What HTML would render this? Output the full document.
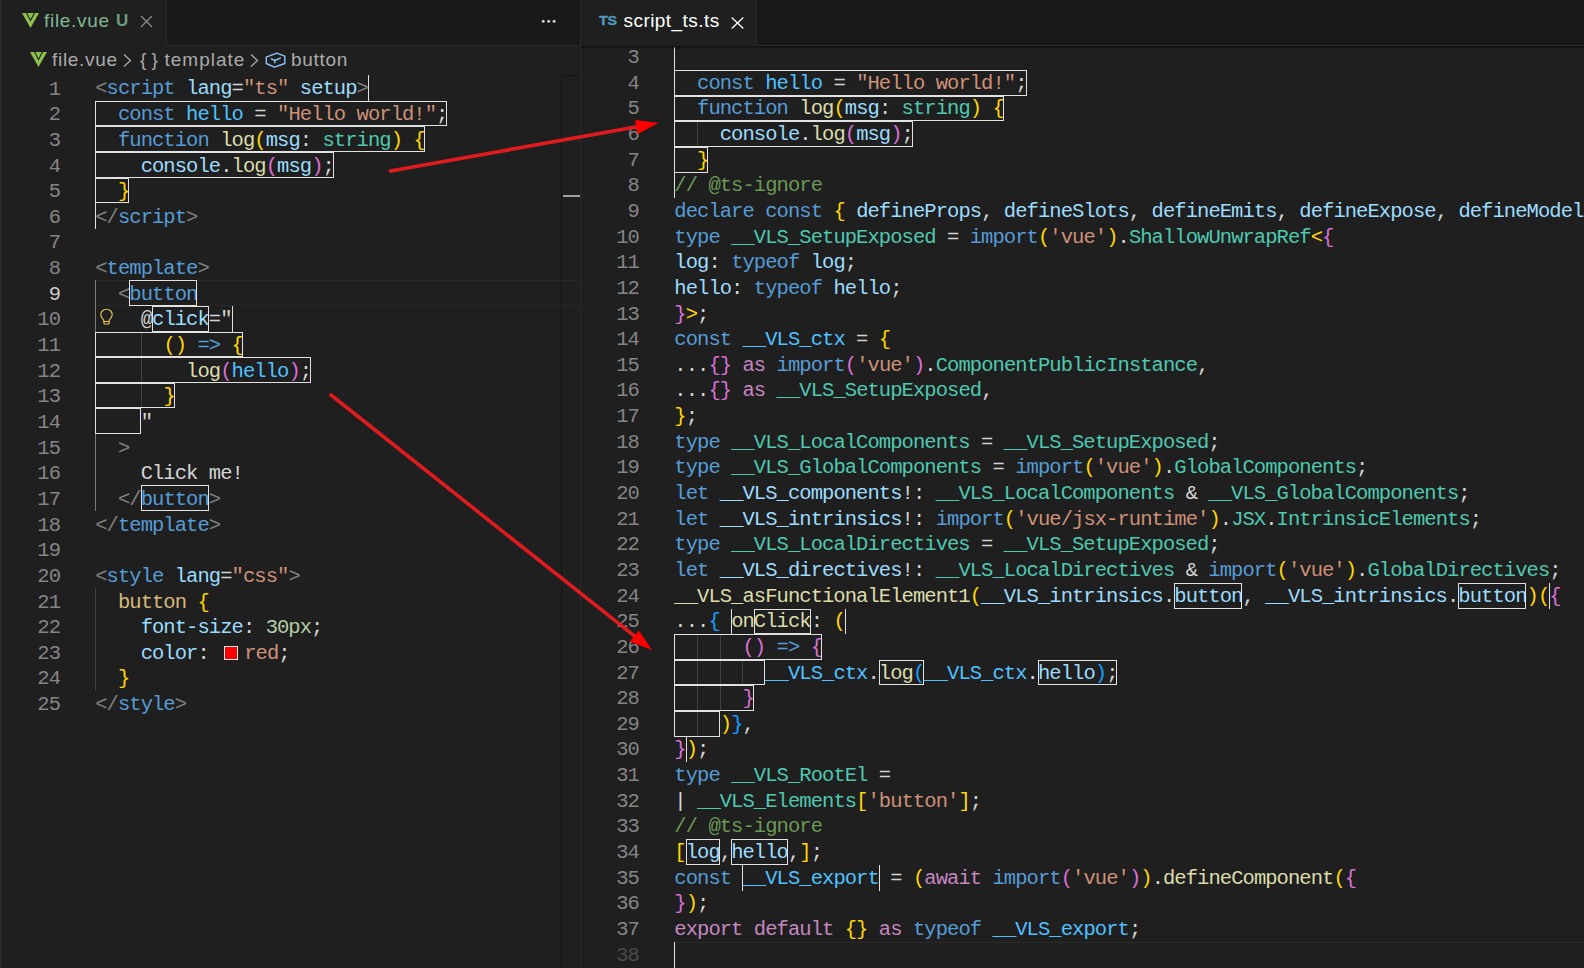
<!DOCTYPE html><html><head><meta charset="utf-8"><style>
*{margin:0;padding:0;box-sizing:border-box}
html,body{width:1584px;height:968px;overflow:hidden;background:#1f1f1f}
body{position:relative;font-family:"Liberation Sans",sans-serif}
.abs{position:absolute}
.ln{position:absolute;white-space:pre;font-family:"Liberation Mono",monospace;font-size:20.5px;letter-spacing:-0.939845px;line-height:25.645px;height:25.645px}
.num{position:absolute;white-space:pre;font-family:"Liberation Mono",monospace;font-size:20.5px;letter-spacing:-0.939845px;line-height:25.645px;text-align:right;color:#858585}
.bx{position:absolute;border:1px solid #E2E2E2}
.vl{position:absolute;width:1px;background:#E2E2E2}
.ig{position:absolute;width:1px;background:#404040}
.ig.act{background:#7a7a7a}
.sw{display:inline-block;width:14px;height:14px;background:#FF0000;border:1px solid #EEEEEE;margin:0 6px 0 4px;vertical-align:-1px}
</style></head><body><div class="abs" style="left:0;top:0;width:580px;height:968px;background:#1f1f1f;overflow:hidden"><div class="abs" style="left:0;top:0;width:580px;height:46px;background:#181818;border-bottom:1px solid #2B2B2B"></div><div class="abs" style="left:0;top:0;width:167px;height:46px;background:#1f1f1f;border-right:1px solid #2B2B2B"></div><div class="abs" style="left:95px;top:280px;width:485px;height:26px;border-top:1px solid #282828;border-bottom:1px solid #282828"></div><div class="ig act" style="left:95px;top:280px;height:231px"></div><div class="ig" style="left:95px;top:588px;height:103px"></div><div class="ig" style="left:141px;top:332px;height:76px"></div><div class="ln" style="left:95.20px;top:75.600px"><span style="color:#808080">&lt;</span><span style="color:#569CD6">script</span><span style="color:#D4D4D4"> </span><span style="color:#9CDCFE">lang</span><span style="color:#D4D4D4">=</span><span style="color:#CE9178">&quot;ts&quot;</span><span style="color:#D4D4D4"> </span><span style="color:#9CDCFE">setup</span><span style="color:#808080">&gt;</span></div><div class="ln" style="left:95.20px;top:102.245px"><span style="color:#D4D4D4">  </span><span style="color:#569CD6">const</span><span style="color:#D4D4D4"> </span><span style="color:#4FC1FF">hello</span><span style="color:#D4D4D4"> = </span><span style="color:#CE9178">&quot;Hello world!&quot;</span><span style="color:#D4D4D4">;</span></div><div class="ln" style="left:95.20px;top:127.890px"><span style="color:#D4D4D4">  </span><span style="color:#569CD6">function</span><span style="color:#D4D4D4"> </span><span style="color:#DCDCAA">log</span><span style="color:#FFD700">(</span><span style="color:#9CDCFE">msg</span><span style="color:#D4D4D4">: </span><span style="color:#4EC9B0">string</span><span style="color:#FFD700">)</span><span style="color:#D4D4D4"> </span><span style="color:#FFD700">{</span></div><div class="ln" style="left:95.20px;top:153.535px"><span style="color:#D4D4D4">    </span><span style="color:#9CDCFE">console</span><span style="color:#D4D4D4">.</span><span style="color:#DCDCAA">log</span><span style="color:#DA70D6">(</span><span style="color:#9CDCFE">msg</span><span style="color:#DA70D6">)</span><span style="color:#D4D4D4">;</span></div><div class="ln" style="left:95.20px;top:179.180px"><span style="color:#D4D4D4">  </span><span style="color:#FFD700">}</span></div><div class="ln" style="left:95.20px;top:204.825px"><span style="color:#808080">&lt;/</span><span style="color:#569CD6">script</span><span style="color:#808080">&gt;</span></div><div class="ln" style="left:95.20px;top:230.470px"></div><div class="ln" style="left:95.20px;top:256.115px"><span style="color:#808080">&lt;</span><span style="color:#569CD6">template</span><span style="color:#808080">&gt;</span></div><div class="ln" style="left:95.20px;top:281.760px"><span style="color:#D4D4D4">  </span><span style="color:#808080">&lt;</span><span style="color:#569CD6">button</span></div><div class="ln" style="left:95.20px;top:307.405px"><span style="color:#D4D4D4">    </span><span style="color:#D4D4D4">@</span><span style="color:#9CDCFE">click</span><span style="color:#D4D4D4">=</span><span style="color:#D4D4D4">&quot;</span></div><div class="ln" style="left:95.20px;top:333.050px"><span style="color:#D4D4D4">      </span><span style="color:#FFD700">()</span><span style="color:#D4D4D4"> </span><span style="color:#569CD6">=&gt;</span><span style="color:#D4D4D4"> </span><span style="color:#FFD700">{</span></div><div class="ln" style="left:95.20px;top:358.695px"><span style="color:#D4D4D4">        </span><span style="color:#DCDCAA">log</span><span style="color:#DA70D6">(</span><span style="color:#4FC1FF">hello</span><span style="color:#DA70D6">)</span><span style="color:#D4D4D4">;</span></div><div class="ln" style="left:95.20px;top:384.340px"><span style="color:#D4D4D4">      </span><span style="color:#FFD700">}</span></div><div class="ln" style="left:95.20px;top:409.985px"><span style="color:#D4D4D4">    </span><span style="color:#D4D4D4">&quot;</span></div><div class="ln" style="left:95.20px;top:435.630px"><span style="color:#D4D4D4">  </span><span style="color:#808080">&gt;</span></div><div class="ln" style="left:95.20px;top:461.275px"><span style="color:#D4D4D4">    </span><span style="color:#D4D4D4">Click me!</span></div><div class="ln" style="left:95.20px;top:486.920px"><span style="color:#D4D4D4">  </span><span style="color:#808080">&lt;/</span><span style="color:#569CD6">button</span><span style="color:#808080">&gt;</span></div><div class="ln" style="left:95.20px;top:512.565px"><span style="color:#808080">&lt;/</span><span style="color:#569CD6">template</span><span style="color:#808080">&gt;</span></div><div class="ln" style="left:95.20px;top:538.210px"></div><div class="ln" style="left:95.20px;top:563.855px"><span style="color:#808080">&lt;</span><span style="color:#569CD6">style</span><span style="color:#D4D4D4"> </span><span style="color:#9CDCFE">lang</span><span style="color:#D4D4D4">=</span><span style="color:#CE9178">&quot;css&quot;</span><span style="color:#808080">&gt;</span></div><div class="ln" style="left:95.20px;top:589.500px"><span style="color:#D4D4D4">  </span><span style="color:#D7BA7D">button</span><span style="color:#D4D4D4"> </span><span style="color:#FFD700">{</span></div><div class="ln" style="left:95.20px;top:615.145px"><span style="color:#D4D4D4">    </span><span style="color:#9CDCFE">font-size</span><span style="color:#D4D4D4">: </span><span style="color:#B5CEA8">30px</span><span style="color:#D4D4D4">;</span></div><div class="ln" style="left:95.20px;top:640.790px"><span style="color:#D4D4D4">    </span><span style="color:#9CDCFE">color</span><span style="color:#D4D4D4">: </span><span class="sw"></span><span style="color:#CE9178">red</span><span style="color:#D4D4D4">;</span></div><div class="ln" style="left:95.20px;top:666.435px"><span style="color:#D4D4D4">  </span><span style="color:#FFD700">}</span></div><div class="ln" style="left:95.20px;top:692.080px"><span style="color:#808080">&lt;/</span><span style="color:#569CD6">style</span><span style="color:#808080">&gt;</span></div><div class="vl" style="left:368px;top:75px;height:26px"></div><div class="bx" style="left:95px;top:101px;width:352px;height:25px"></div><div class="bx" style="left:95px;top:126px;width:330px;height:26px"></div><div class="bx" style="left:95px;top:152px;width:239px;height:26px"></div><div class="bx" style="left:95px;top:178px;width:34px;height:25px"></div><div class="vl" style="left:95px;top:203px;height:26px"></div><div class="bx" style="left:129px;top:280px;width:68px;height:26px"></div><div class="bx" style="left:152px;top:306px;width:57px;height:26px"></div><div class="vl" style="left:232px;top:306px;height:26px"></div><div class="bx" style="left:95px;top:332px;width:148px;height:25px"></div><div class="bx" style="left:95px;top:357px;width:216px;height:26px"></div><div class="bx" style="left:95px;top:383px;width:80px;height:25px"></div><div class="bx" style="left:95px;top:408px;width:46px;height:26px"></div><div class="bx" style="left:141px;top:485px;width:68px;height:26px"></div><div class="num" style="right:519.94px;top:76.600px;color:#858585">1</div><div class="num" style="right:519.94px;top:102.245px;color:#858585">2</div><div class="num" style="right:519.94px;top:127.890px;color:#858585">3</div><div class="num" style="right:519.94px;top:153.535px;color:#858585">4</div><div class="num" style="right:519.94px;top:179.180px;color:#858585">5</div><div class="num" style="right:519.94px;top:204.825px;color:#858585">6</div><div class="num" style="right:519.94px;top:230.470px;color:#858585">7</div><div class="num" style="right:519.94px;top:256.115px;color:#858585">8</div><div class="num" style="right:519.94px;top:281.760px;color:#CCCCCC">9</div><div class="num" style="right:519.94px;top:307.405px;color:#858585">10</div><div class="num" style="right:519.94px;top:333.050px;color:#858585">11</div><div class="num" style="right:519.94px;top:358.695px;color:#858585">12</div><div class="num" style="right:519.94px;top:384.340px;color:#858585">13</div><div class="num" style="right:519.94px;top:409.985px;color:#858585">14</div><div class="num" style="right:519.94px;top:435.630px;color:#858585">15</div><div class="num" style="right:519.94px;top:461.275px;color:#858585">16</div><div class="num" style="right:519.94px;top:486.920px;color:#858585">17</div><div class="num" style="right:519.94px;top:512.565px;color:#858585">18</div><div class="num" style="right:519.94px;top:538.210px;color:#858585">19</div><div class="num" style="right:519.94px;top:563.855px;color:#858585">20</div><div class="num" style="right:519.94px;top:589.500px;color:#858585">21</div><div class="num" style="right:519.94px;top:615.145px;color:#858585">22</div><div class="num" style="right:519.94px;top:640.790px;color:#858585">23</div><div class="num" style="right:519.94px;top:666.435px;color:#858585">24</div><div class="num" style="right:519.94px;top:692.080px;color:#858585">25</div><div class="abs" style="left:561px;top:75px;width:1px;height:893px;background:#141414"></div><div class="abs" style="left:561px;top:75px;width:19px;height:1px;background:#141414"></div><div class="abs" style="left:563px;top:195px;width:17px;height:2px;background:#A0A0A0"></div></div><div class="abs" style="left:0;top:0;width:2px;height:968px;background:#2a2a2a"></div><div class="abs" style="left:2px;top:0;width:1px;height:968px;background:#171717"></div><div class="abs" style="left:580px;top:0;width:1px;height:968px;background:#2B2B2B"></div><div class="abs" style="left:581px;top:0;width:1003px;height:968px;background:#1f1f1f;overflow:hidden"></div><div class="abs" style="left:581px;top:45px;width:1003px;height:923px;overflow:hidden" id="rc"></div><div class="abs" style="left:674px;top:942px;width:910px;height:1px;background:#2a2a2a"></div><div class="abs" style="left:581px;top:45px;width:1003px;height:923px;overflow:hidden"><div class="abs" style="left:-581px;top:-45px;width:1584px;height:968px"><div class="ig" style="left:697px;top:121px;height:26px"></div><div class="ig" style="left:697px;top:634px;height:77px"></div><div class="ig" style="left:697px;top:711px;height:26px"></div><div class="ig" style="left:720px;top:634px;height:77px"></div><div class="ig" style="left:742px;top:660px;height:25px"></div><div class="ln" style="left:674.30px;top:45.050px"></div><div class="ln" style="left:674.30px;top:70.695px"><span style="color:#D4D4D4">  </span><span style="color:#569CD6">const</span><span style="color:#D4D4D4"> </span><span style="color:#4FC1FF">hello</span><span style="color:#D4D4D4"> = </span><span style="color:#CE9178">&quot;Hello world!&quot;</span><span style="color:#D4D4D4">;</span></div><div class="ln" style="left:674.30px;top:96.340px"><span style="color:#D4D4D4">  </span><span style="color:#569CD6">function</span><span style="color:#D4D4D4"> </span><span style="color:#DCDCAA">log</span><span style="color:#FFD700">(</span><span style="color:#9CDCFE">msg</span><span style="color:#D4D4D4">: </span><span style="color:#4EC9B0">string</span><span style="color:#FFD700">)</span><span style="color:#D4D4D4"> </span><span style="color:#FFD700">{</span></div><div class="ln" style="left:674.30px;top:121.985px"><span style="color:#D4D4D4">    </span><span style="color:#9CDCFE">console</span><span style="color:#D4D4D4">.</span><span style="color:#DCDCAA">log</span><span style="color:#DA70D6">(</span><span style="color:#9CDCFE">msg</span><span style="color:#DA70D6">)</span><span style="color:#D4D4D4">;</span></div><div class="ln" style="left:674.30px;top:147.630px"><span style="color:#D4D4D4">  </span><span style="color:#FFD700">}</span></div><div class="ln" style="left:674.30px;top:173.275px"><span style="color:#6A9955">// @ts-ignore</span></div><div class="ln" style="left:674.30px;top:198.920px"><span style="color:#569CD6">declare const</span><span style="color:#D4D4D4"> </span><span style="color:#FFD700">{</span><span style="color:#D4D4D4"> </span><span style="color:#9CDCFE">defineProps</span><span style="color:#D4D4D4">, </span><span style="color:#9CDCFE">defineSlots</span><span style="color:#D4D4D4">, </span><span style="color:#9CDCFE">defineEmits</span><span style="color:#D4D4D4">, </span><span style="color:#9CDCFE">defineExpose</span><span style="color:#D4D4D4">, </span><span style="color:#9CDCFE">defineModel</span><span style="color:#D4D4D4">, withDefaults }</span></div><div class="ln" style="left:674.30px;top:224.565px"><span style="color:#569CD6">type</span><span style="color:#D4D4D4"> </span><span style="color:#4EC9B0">__VLS_SetupExposed</span><span style="color:#D4D4D4"> = </span><span style="color:#569CD6">import</span><span style="color:#FFD700">(</span><span style="color:#CE9178">&#x27;vue&#x27;</span><span style="color:#FFD700">)</span><span style="color:#D4D4D4">.</span><span style="color:#4EC9B0">ShallowUnwrapRef</span><span style="color:#FFD700">&lt;</span><span style="color:#DA70D6">{</span></div><div class="ln" style="left:674.30px;top:250.210px"><span style="color:#9CDCFE">log</span><span style="color:#D4D4D4">: </span><span style="color:#569CD6">typeof</span><span style="color:#D4D4D4"> </span><span style="color:#9CDCFE">log</span><span style="color:#D4D4D4">;</span></div><div class="ln" style="left:674.30px;top:275.855px"><span style="color:#9CDCFE">hello</span><span style="color:#D4D4D4">: </span><span style="color:#569CD6">typeof</span><span style="color:#D4D4D4"> </span><span style="color:#9CDCFE">hello</span><span style="color:#D4D4D4">;</span></div><div class="ln" style="left:674.30px;top:301.500px"><span style="color:#DA70D6">}</span><span style="color:#FFD700">&gt;</span><span style="color:#D4D4D4">;</span></div><div class="ln" style="left:674.30px;top:327.145px"><span style="color:#569CD6">const</span><span style="color:#D4D4D4"> </span><span style="color:#4FC1FF">__VLS_ctx</span><span style="color:#D4D4D4"> = </span><span style="color:#FFD700">{</span></div><div class="ln" style="left:674.30px;top:352.790px"><span style="color:#D4D4D4">...</span><span style="color:#DA70D6">{}</span><span style="color:#D4D4D4"> </span><span style="color:#C586C0">as</span><span style="color:#D4D4D4"> </span><span style="color:#569CD6">import</span><span style="color:#DA70D6">(</span><span style="color:#CE9178">&#x27;vue&#x27;</span><span style="color:#DA70D6">)</span><span style="color:#D4D4D4">.</span><span style="color:#4EC9B0">ComponentPublicInstance</span><span style="color:#D4D4D4">,</span></div><div class="ln" style="left:674.30px;top:378.435px"><span style="color:#D4D4D4">...</span><span style="color:#DA70D6">{}</span><span style="color:#D4D4D4"> </span><span style="color:#C586C0">as</span><span style="color:#D4D4D4"> </span><span style="color:#4EC9B0">__VLS_SetupExposed</span><span style="color:#D4D4D4">,</span></div><div class="ln" style="left:674.30px;top:404.080px"><span style="color:#FFD700">}</span><span style="color:#D4D4D4">;</span></div><div class="ln" style="left:674.30px;top:429.725px"><span style="color:#569CD6">type</span><span style="color:#D4D4D4"> </span><span style="color:#4EC9B0">__VLS_LocalComponents</span><span style="color:#D4D4D4"> = </span><span style="color:#4EC9B0">__VLS_SetupExposed</span><span style="color:#D4D4D4">;</span></div><div class="ln" style="left:674.30px;top:455.370px"><span style="color:#569CD6">type</span><span style="color:#D4D4D4"> </span><span style="color:#4EC9B0">__VLS_GlobalComponents</span><span style="color:#D4D4D4"> = </span><span style="color:#569CD6">import</span><span style="color:#FFD700">(</span><span style="color:#CE9178">&#x27;vue&#x27;</span><span style="color:#FFD700">)</span><span style="color:#D4D4D4">.</span><span style="color:#4EC9B0">GlobalComponents</span><span style="color:#D4D4D4">;</span></div><div class="ln" style="left:674.30px;top:481.015px"><span style="color:#569CD6">let</span><span style="color:#D4D4D4"> </span><span style="color:#9CDCFE">__VLS_components</span><span style="color:#D4D4D4">!: </span><span style="color:#4EC9B0">__VLS_LocalComponents</span><span style="color:#D4D4D4"> &amp; </span><span style="color:#4EC9B0">__VLS_GlobalComponents</span><span style="color:#D4D4D4">;</span></div><div class="ln" style="left:674.30px;top:506.660px"><span style="color:#569CD6">let</span><span style="color:#D4D4D4"> </span><span style="color:#9CDCFE">__VLS_intrinsics</span><span style="color:#D4D4D4">!: </span><span style="color:#569CD6">import</span><span style="color:#FFD700">(</span><span style="color:#CE9178">&#x27;vue/jsx-runtime&#x27;</span><span style="color:#FFD700">)</span><span style="color:#D4D4D4">.</span><span style="color:#4EC9B0">JSX</span><span style="color:#D4D4D4">.</span><span style="color:#4EC9B0">IntrinsicElements</span><span style="color:#D4D4D4">;</span></div><div class="ln" style="left:674.30px;top:532.305px"><span style="color:#569CD6">type</span><span style="color:#D4D4D4"> </span><span style="color:#4EC9B0">__VLS_LocalDirectives</span><span style="color:#D4D4D4"> = </span><span style="color:#4EC9B0">__VLS_SetupExposed</span><span style="color:#D4D4D4">;</span></div><div class="ln" style="left:674.30px;top:557.950px"><span style="color:#569CD6">let</span><span style="color:#D4D4D4"> </span><span style="color:#9CDCFE">__VLS_directives</span><span style="color:#D4D4D4">!: </span><span style="color:#4EC9B0">__VLS_LocalDirectives</span><span style="color:#D4D4D4"> &amp; </span><span style="color:#569CD6">import</span><span style="color:#FFD700">(</span><span style="color:#CE9178">&#x27;vue&#x27;</span><span style="color:#FFD700">)</span><span style="color:#D4D4D4">.</span><span style="color:#4EC9B0">GlobalDirectives</span><span style="color:#D4D4D4">;</span></div><div class="ln" style="left:674.30px;top:583.595px"><span style="color:#DCDCAA">__VLS_asFunctionalElement1</span><span style="color:#FFD700">(</span><span style="color:#9CDCFE">__VLS_intrinsics</span><span style="color:#D4D4D4">.</span><span style="color:#9CDCFE">button</span><span style="color:#D4D4D4">, </span><span style="color:#9CDCFE">__VLS_intrinsics</span><span style="color:#D4D4D4">.</span><span style="color:#9CDCFE">button</span><span style="color:#FFD700">)</span><span style="color:#FFD700">(</span><span style="color:#DA70D6">{</span></div><div class="ln" style="left:674.30px;top:609.240px"><span style="color:#D4D4D4">...</span><span style="color:#179FFF">{</span><span style="color:#D4D4D4"> </span><span style="color:#DCDCAA">onClick</span><span style="color:#D4D4D4">: </span><span style="color:#FFD700">(</span></div><div class="ln" style="left:674.30px;top:634.885px"><span style="color:#D4D4D4">      </span><span style="color:#DA70D6">()</span><span style="color:#D4D4D4"> </span><span style="color:#569CD6">=&gt;</span><span style="color:#D4D4D4"> </span><span style="color:#DA70D6">{</span></div><div class="ln" style="left:674.30px;top:660.530px"><span style="color:#D4D4D4">        </span><span style="color:#4FC1FF">__VLS_ctx</span><span style="color:#D4D4D4">.</span><span style="color:#DCDCAA">log</span><span style="color:#179FFF">(</span><span style="color:#4FC1FF">__VLS_ctx</span><span style="color:#D4D4D4">.</span><span style="color:#9CDCFE">hello</span><span style="color:#179FFF">)</span><span style="color:#D4D4D4">;</span></div><div class="ln" style="left:674.30px;top:686.175px"><span style="color:#D4D4D4">      </span><span style="color:#DA70D6">}</span></div><div class="ln" style="left:674.30px;top:711.820px"><span style="color:#D4D4D4">    </span><span style="color:#FFD700">)</span><span style="color:#179FFF">}</span><span style="color:#D4D4D4">,</span></div><div class="ln" style="left:674.30px;top:737.465px"><span style="color:#DA70D6">}</span><span style="color:#FFD700">)</span><span style="color:#D4D4D4">;</span></div><div class="ln" style="left:674.30px;top:763.110px"><span style="color:#569CD6">type</span><span style="color:#D4D4D4"> </span><span style="color:#4EC9B0">__VLS_RootEl</span><span style="color:#D4D4D4"> =</span></div><div class="ln" style="left:674.30px;top:788.755px"><span style="color:#D4D4D4">| </span><span style="color:#4EC9B0">__VLS_Elements</span><span style="color:#FFD700">[</span><span style="color:#CE9178">&#x27;button&#x27;</span><span style="color:#FFD700">]</span><span style="color:#D4D4D4">;</span></div><div class="ln" style="left:674.30px;top:814.400px"><span style="color:#6A9955">// @ts-ignore</span></div><div class="ln" style="left:674.30px;top:840.045px"><span style="color:#FFD700">[</span><span style="color:#9CDCFE">log</span><span style="color:#D4D4D4">,</span><span style="color:#9CDCFE">hello</span><span style="color:#D4D4D4">,</span><span style="color:#FFD700">]</span><span style="color:#D4D4D4">;</span></div><div class="ln" style="left:674.30px;top:865.690px"><span style="color:#569CD6">const</span><span style="color:#D4D4D4"> </span><span style="color:#4FC1FF">__VLS_export</span><span style="color:#D4D4D4"> = </span><span style="color:#FFD700">(</span><span style="color:#C586C0">await</span><span style="color:#D4D4D4"> </span><span style="color:#569CD6">import</span><span style="color:#DA70D6">(</span><span style="color:#CE9178">&#x27;vue&#x27;</span><span style="color:#DA70D6">)</span><span style="color:#FFD700">)</span><span style="color:#D4D4D4">.</span><span style="color:#DCDCAA">defineComponent</span><span style="color:#FFD700">(</span><span style="color:#DA70D6">{</span></div><div class="ln" style="left:674.30px;top:891.335px"><span style="color:#DA70D6">}</span><span style="color:#FFD700">)</span><span style="color:#D4D4D4">;</span></div><div class="ln" style="left:674.30px;top:916.980px"><span style="color:#C586C0">export default</span><span style="color:#D4D4D4"> </span><span style="color:#FFD700">{}</span><span style="color:#D4D4D4"> </span><span style="color:#C586C0">as</span><span style="color:#D4D4D4"> </span><span style="color:#569CD6">typeof</span><span style="color:#D4D4D4"> </span><span style="color:#4FC1FF">__VLS_export</span><span style="color:#D4D4D4">;</span></div><div class="ln" style="left:674.30px;top:942.625px"></div><div class="vl" style="left:674px;top:45px;height:25px"></div><div class="bx" style="left:674px;top:70px;width:353px;height:26px"></div><div class="bx" style="left:674px;top:96px;width:330px;height:25px"></div><div class="bx" style="left:674px;top:121px;width:239px;height:26px"></div><div class="bx" style="left:674px;top:147px;width:34px;height:26px"></div><div class="vl" style="left:674px;top:173px;height:25px"></div><div class="bx" style="left:1174px;top:583px;width:68px;height:26px"></div><div class="bx" style="left:1458px;top:583px;width:68px;height:26px"></div><div class="vl" style="left:1549px;top:583px;height:26px"></div><div class="vl" style="left:731px;top:609px;height:25px"></div><div class="bx" style="left:754px;top:609px;width:57px;height:25px"></div><div class="vl" style="left:845px;top:609px;height:25px"></div><div class="bx" style="left:674px;top:634px;width:148px;height:26px"></div><div class="bx" style="left:674px;top:660px;width:91px;height:25px"></div><div class="bx" style="left:879px;top:660px;width:45px;height:25px"></div><div class="bx" style="left:1038px;top:660px;width:79px;height:25px"></div><div class="bx" style="left:674px;top:685px;width:80px;height:26px"></div><div class="bx" style="left:674px;top:711px;width:46px;height:26px"></div><div class="vl" style="left:686px;top:737px;height:25px"></div><div class="bx" style="left:686px;top:839px;width:34px;height:26px"></div><div class="bx" style="left:731px;top:839px;width:57px;height:26px"></div><div class="vl" style="left:742px;top:865px;height:26px"></div><div class="vl" style="left:879px;top:865px;height:26px"></div><div class="vl" style="left:674px;top:942px;height:26px"></div><div class="num" style="right:945.14px;top:45.050px;color:#858585">3</div><div class="num" style="right:945.14px;top:70.695px;color:#858585">4</div><div class="num" style="right:945.14px;top:96.340px;color:#858585">5</div><div class="num" style="right:945.14px;top:121.985px;color:#858585">6</div><div class="num" style="right:945.14px;top:147.630px;color:#858585">7</div><div class="num" style="right:945.14px;top:173.275px;color:#858585">8</div><div class="num" style="right:945.14px;top:198.920px;color:#858585">9</div><div class="num" style="right:945.14px;top:224.565px;color:#858585">10</div><div class="num" style="right:945.14px;top:250.210px;color:#858585">11</div><div class="num" style="right:945.14px;top:275.855px;color:#858585">12</div><div class="num" style="right:945.14px;top:301.500px;color:#858585">13</div><div class="num" style="right:945.14px;top:327.145px;color:#858585">14</div><div class="num" style="right:945.14px;top:352.790px;color:#858585">15</div><div class="num" style="right:945.14px;top:378.435px;color:#858585">16</div><div class="num" style="right:945.14px;top:404.080px;color:#858585">17</div><div class="num" style="right:945.14px;top:429.725px;color:#858585">18</div><div class="num" style="right:945.14px;top:455.370px;color:#858585">19</div><div class="num" style="right:945.14px;top:481.015px;color:#858585">20</div><div class="num" style="right:945.14px;top:506.660px;color:#858585">21</div><div class="num" style="right:945.14px;top:532.305px;color:#858585">22</div><div class="num" style="right:945.14px;top:557.950px;color:#858585">23</div><div class="num" style="right:945.14px;top:583.595px;color:#858585">24</div><div class="num" style="right:945.14px;top:609.240px;color:#858585">25</div><div class="num" style="right:945.14px;top:634.885px;color:#858585">26</div><div class="num" style="right:945.14px;top:660.530px;color:#858585">27</div><div class="num" style="right:945.14px;top:686.175px;color:#858585">28</div><div class="num" style="right:945.14px;top:711.820px;color:#858585">29</div><div class="num" style="right:945.14px;top:737.465px;color:#858585">30</div><div class="num" style="right:945.14px;top:763.110px;color:#858585">31</div><div class="num" style="right:945.14px;top:788.755px;color:#858585">32</div><div class="num" style="right:945.14px;top:814.400px;color:#858585">33</div><div class="num" style="right:945.14px;top:840.045px;color:#858585">34</div><div class="num" style="right:945.14px;top:865.690px;color:#858585">35</div><div class="num" style="right:945.14px;top:891.335px;color:#858585">36</div><div class="num" style="right:945.14px;top:916.980px;color:#858585">37</div><div class="num" style="right:945.14px;top:942.625px;color:#4a4a4a">38</div></div></div><div class="abs" style="left:581px;top:46px;width:1003px;height:3px;background:linear-gradient(#0e0e0e,rgba(0,0,0,0))"></div><div class="abs" style="left:581px;top:0;width:1003px;height:46px;background:#181818;border-bottom:1px solid #2B2B2B"></div><div class="abs" style="left:581px;top:0;width:176px;height:46px;background:#1f1f1f;border-right:1px solid #2B2B2B"></div>
<div class="abs" style="left:22px;top:13px;width:17px;height:15px"><svg width="17" height="15" viewBox="0 0 17 15"><path d="M0 0H17L8.5 15z" fill="#8DC149"/><path d="M4.3 -0.5L8.5 7.6 12.7 -0.5" stroke="#1f1f1f" stroke-width="1.1" fill="none"/></svg></div>
<div class="abs" style="left:44px;top:8px;font-size:19px;letter-spacing:0.7px;color:#7FB893;line-height:26px">file.vue</div>
<div class="abs" style="left:116px;top:8px;font-size:17px;font-weight:bold;color:#6A9F7F;line-height:26px">U</div>
<div class="abs" style="left:140px;top:14px;width:13px;height:13px"><svg width="13" height="13" viewBox="0 0 13 13"><path d="M1 1L12 12M12 1L1 12" stroke="#8B8B8B" stroke-width="1.4"/></svg></div>
<svg class="abs" style="left:538px;top:16px" width="20" height="10" viewBox="538 16 20 10"><circle cx="543.2" cy="21.2" r="1.5" fill="#CCCCCC"/><circle cx="548.7" cy="21.2" r="1.5" fill="#CCCCCC"/><circle cx="554.1" cy="21.2" r="1.5" fill="#CCCCCC"/></svg>

<div class="abs" style="left:30px;top:52px;width:17px;height:15px"><svg width="17" height="15" viewBox="0 0 17 15"><path d="M0 0H17L8.5 15z" fill="#8DC149"/><path d="M4.3 -0.5L8.5 7.6 12.7 -0.5" stroke="#1f1f1f" stroke-width="1.1" fill="none"/></svg></div>
<div class="abs" style="left:52px;top:47px;font-size:19px;letter-spacing:0.7px;color:#ABABAB;line-height:26px;white-space:pre">file.vue</div>
<div class="abs" style="left:123px;top:53px;width:9px;height:15px"><svg width="9" height="15" viewBox="0 0 9 15"><path d="M1 1.5L7.5 7.5 1 13.5" stroke="#ABABAB" stroke-width="1.3" fill="none"/></svg></div>
<div class="abs" style="left:140px;top:47px;font-size:19px;color:#ABABAB;line-height:26px;white-space:pre">{ }</div>
<div class="abs" style="left:164.5px;top:47px;font-size:19px;letter-spacing:1.0px;color:#ABABAB;line-height:26px;white-space:pre">template</div>
<div class="abs" style="left:250px;top:53px;width:9px;height:15px"><svg width="9" height="15" viewBox="0 0 9 15"><path d="M1 1.5L7.5 7.5 1 13.5" stroke="#ABABAB" stroke-width="1.3" fill="none"/></svg></div>
<svg class="abs" style="left:262px;top:50px" width="26" height="20" viewBox="262 50 26 20"><path d="M266.3 57.1L276.8 53.1 284.8 56.2V63.5L274.4 67.2 266.3 63.5z M270.9 58.6L274.8 60.5 280.8 57.8 M274.8 60.5V63.2" stroke="#8CC4FA" stroke-width="1.4" fill="none" stroke-linejoin="round"/></svg>
<div class="abs" style="left:291px;top:47px;font-size:19px;letter-spacing:0.7px;color:#ABABAB;line-height:26px;white-space:pre">button</div>

<div class="abs" style="left:99px;top:308px;width:15px;height:17px"><svg width="15" height="17" viewBox="0 0 15 17"><path d="M7.5 1.2C4.3 1.2 1.8 3.6 1.8 6.6c0 1.9 1 3.2 2 4.2.6.6 1 1.3 1 2.1v.6h5.4v-.6c0-.8.4-1.5 1-2.1 1-1 2-2.3 2-4.2 0-3-2.5-5.4-5.7-5.4zM4.9 13.6v1.4c0 .6.4 1 1 1h3.2c.6 0 1-.4 1-1v-1.4" stroke="#EDCB55" stroke-width="1.15" fill="none"/></svg></div>

<div class="abs" style="left:598.5px;top:14px;font-size:13.5px;font-weight:bold;color:#519ABA;line-height:14px;letter-spacing:-0.2px;transform:scaleX(1.05);transform-origin:0 0;-webkit-text-stroke:0.4px #519ABA">TS</div>
<div class="abs" style="left:623.5px;top:8px;font-size:19px;letter-spacing:0.45px;color:#FFFFFF;line-height:26px;white-space:pre">script_ts.ts</div>
<div class="abs" style="left:731px;top:15px;width:13px;height:12px"><svg width="13" height="12" viewBox="0 0 13 12"><path d="M0.7 0.5L12.3 11.5M12.3 0.5L0.7 11.5" stroke="#FFFFFF" stroke-width="1.25"/></svg></div>
<svg class="abs" style="left:0;top:0" width="1584" height="968" viewBox="0 0 1584 968"><line x1="390.5" y1="171.0" x2="638.3" y2="126.6" stroke="#E01B1F" stroke-width="3.6" stroke-linecap="round"/><path d="M658.5 123.0L637.6 134.1L635.1 119.9z" fill="#FF0000"/><line x1="331.0" y1="395.0" x2="635.9" y2="637.2" stroke="#E01B1F" stroke-width="3.6" stroke-linecap="round"/><path d="M652.0 650.0L629.9 641.6L638.9 630.4z" fill="#FF0000"/></svg></body></html>
